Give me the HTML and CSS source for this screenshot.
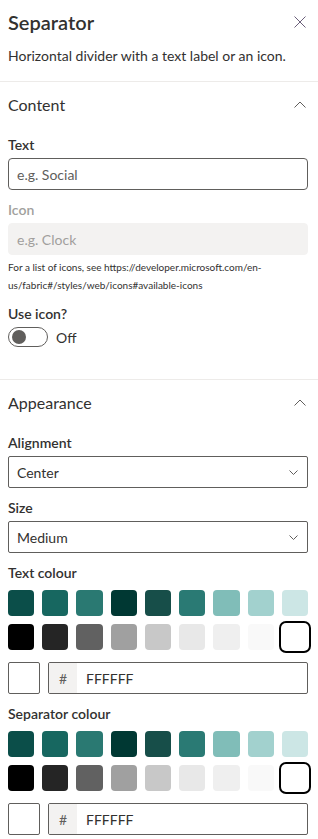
FILE: index.html
```html
<!DOCTYPE html>
<html lang="en">
<head>
  <meta charset="UTF-8" />
  <title>Separator</title>
  <link rel="stylesheet" href="styles.css">
</head>
<body>
  <div class="pane">
    <header class="pane-head">
      <h1>Separator</h1>
      <button class="close" aria-label="Close">
        <svg width="12" height="12" viewBox="0 0 12 12"><path d="M0.5 0.5 L11.5 11.5 M11.5 0.5 L0.5 11.5" /></svg>
      </button>
    </header>
    <p class="pane-desc">Horizontal divider with a text label or an icon.</p>

    <section class="group">
      <div class="group-head">
        <h2>Content</h2>
        <svg class="chev" width="12" height="7" viewBox="0 0 12 7"><path d="M0.5 6.5 L6 1 L11.5 6.5" /></svg>
      </div>

      <div class="field">
        <label>Text</label>
        <input class="text-input" type="text" placeholder="e.g. Social" />
      </div>

      <div class="field">
        <label class="disabled">Icon</label>
        <input class="text-input" type="text" placeholder="e.g. Clock" disabled />
        <p class="help">For a list of icons, see https://developer.microsoft.com/en-us/fabric#/styles/web/icons#available-icons</p>
      </div>

      <div class="field">
        <label>Use icon?</label>
        <div class="toggle-row">
          <span class="toggle"><span class="knob"></span></span>
          <span>Off</span>
        </div>
      </div>
    </section>

    <section class="group">
      <div class="group-head">
        <h2>Appearance</h2>
        <svg class="chev" width="12" height="7" viewBox="0 0 12 7"><path d="M0.5 6.5 L6 1 L11.5 6.5" /></svg>
      </div>

      <div class="field">
        <label>Alignment</label>
        <div class="dropdown">
          <span>Center</span>
          <svg width="9" height="5" viewBox="0 0 9 5"><path d="M0.5 0.5 L4.5 4.5 L8.5 0.5" /></svg>
        </div>
      </div>

      <div class="field">
        <label>Size</label>
        <div class="dropdown">
          <span>Medium</span>
          <svg width="9" height="5" viewBox="0 0 9 5"><path d="M0.5 0.5 L4.5 4.5 L8.5 0.5" /></svg>
        </div>
      </div>

      <div class="field">
        <label>Text colour</label>
        <div class="swatches">
          <span></span><span></span><span></span><span></span><span></span><span></span><span></span><span></span><span></span>
          <span></span><span></span><span></span><span></span><span></span><span></span><span></span><span></span><span class="selected"></span>
        </div>
        <div class="hex-row">
          <span class="preview"></span>
          <div class="hex-input">
            <span class="hash">#</span>
            <span class="hex-value">FFFFFF</span>
          </div>
        </div>
      </div>

      <div class="field">
        <label>Separator colour</label>
        <div class="swatches">
          <span></span><span></span><span></span><span></span><span></span><span></span><span></span><span></span><span></span>
          <span></span><span></span><span></span><span></span><span></span><span></span><span></span><span></span><span class="selected"></span>
        </div>
        <div class="hex-row">
          <span class="preview"></span>
          <div class="hex-input">
            <span class="hash">#</span>
            <span class="hex-value">FFFFFF</span>
          </div>
        </div>
      </div>
    </section>
  </div>
</body>
</html>
```

FILE: styles.css
```css
:root {
  --text: #323130;
  --muted: #605e5c;
  --border: #8a8886;
  --line: #edebe9;
  --disabled-bg: #f3f2f1;
}

body {
  margin: 0;
  background: #fff;
  color: var(--text);
  font-family: Lato, "Open Sans", sans-serif;
  font-size: 14px;
}

.pane {
  width: 318px;
  overflow: hidden;
}

.pane-head {
  display: flex;
  align-items: center;
  justify-content: space-between;
  height: 44px;
  padding: 0 12px 0 8px;
}

.pane-head h1 {
  margin: 0;
  font-size: 20px;
  font-weight: 600;
}

.close {
  background: none;
  border: none;
  padding: 0;
  display: flex;
}

.close path,
.chev path,
.dropdown path {
  fill: none;
  stroke: var(--muted);
  stroke-width: 1;
}

.close path {
  stroke: #6b5f7a;
}

.pane-desc {
  margin: 2px 8px 15px;
  line-height: 20px;
}

.group {
  border-top: 1px solid var(--line);
  padding: 0 10px 32px 8px;
}

.group-head {
  display: flex;
  align-items: center;
  justify-content: space-between;
  height: 44px;
  padding-right: 2px;
}

.group-head h2 {
  margin: 0;
  font-size: 16px;
  font-weight: 400;
}

.field {
  margin-top: 10px;
}

.group-head + .field {
  margin-top: 9px;
}

.field label {
  display: block;
  font-weight: 600;
  line-height: 20px;
  margin-bottom: 3px;
}

.field label.disabled {
  color: #a19f9d;
}

.text-input {
  box-sizing: border-box;
  width: 100%;
  height: 32px;
  padding: 0 8px;
  border: 1px solid var(--muted);
  border-radius: 4px;
  font: inherit;
  color: var(--text);
}

.text-input::placeholder {
  color: var(--muted);
}

.text-input:disabled {
  border-color: var(--disabled-bg);
  background: var(--disabled-bg);
}

.text-input:disabled::placeholder {
  color: #a19f9d;
}

.help {
  margin: 3px 0 0;
  font-size: 10px;
  line-height: 18px;
  color: var(--text);
}

.toggle-row {
  display: flex;
  align-items: center;
  gap: 8px;
}

.toggle {
  box-sizing: border-box;
  width: 40px;
  height: 20px;
  border: 1px solid var(--muted);
  border-radius: 10px;
  display: flex;
  align-items: center;
  padding-left: 3px;
}

.knob {
  width: 14px;
  height: 14px;
  border-radius: 50%;
  background: var(--muted);
}

.dropdown {
  box-sizing: border-box;
  height: 32px;
  border: 1px solid var(--muted);
  border-radius: 2px;
  display: flex;
  align-items: center;
  justify-content: space-between;
  padding: 0 9px 0 8px;
}

.swatches {
  display: grid;
  grid-template-columns: repeat(9, 1fr);
  gap: 8px;
  margin-top: 7px;
}

.swatches span {
  height: 26px;
  border-radius: 4px;
}

.swatches span:nth-child(1) { background: #0b4e49; }
.swatches span:nth-child(2) { background: #176760; }
.swatches span:nth-child(3) { background: #2a7972; }
.swatches span:nth-child(4) { background: #003833; }
.swatches span:nth-child(5) { background: #174e49; }
.swatches span:nth-child(6) { background: #2a7a74; }
.swatches span:nth-child(7) { background: #80bdb8; }
.swatches span:nth-child(8) { background: #a2d1ce; }
.swatches span:nth-child(9) { background: #cce6e5; }
.swatches span:nth-child(10) { background: #000; }
.swatches span:nth-child(11) { background: #252525; }
.swatches span:nth-child(12) { background: #616161; }
.swatches span:nth-child(13) { background: #a0a0a0; }
.swatches span:nth-child(14) { background: #c8c8c8; }
.swatches span:nth-child(15) { background: #e8e8e8; }
.swatches span:nth-child(16) { background: #efefef; }
.swatches span:nth-child(17) { background: #f9f9f9; }
.swatches span:nth-child(18) { background: #fff; }

.swatches span.selected {
  box-shadow: 0 0 0 1px #fff, 0 0 0 3px #000;
}

.hex-row {
  display: flex;
  gap: 8px;
  margin-top: 12px;
}

.preview {
  box-sizing: border-box;
  width: 32px;
  height: 32px;
  border: 1px solid var(--muted);
  border-radius: 2px;
  background: #fff;
}

.hex-input {
  flex: 1;
  box-sizing: border-box;
  height: 32px;
  border: 1px solid var(--muted);
  border-radius: 2px;
  display: flex;
  align-items: stretch;
  overflow: hidden;
}

.hash {
  width: 28px;
  background: var(--disabled-bg);
  color: var(--muted);
  display: flex;
  align-items: center;
  justify-content: center;
}

.hex-value {
  display: flex;
  align-items: center;
  padding-left: 9px;
}
```
